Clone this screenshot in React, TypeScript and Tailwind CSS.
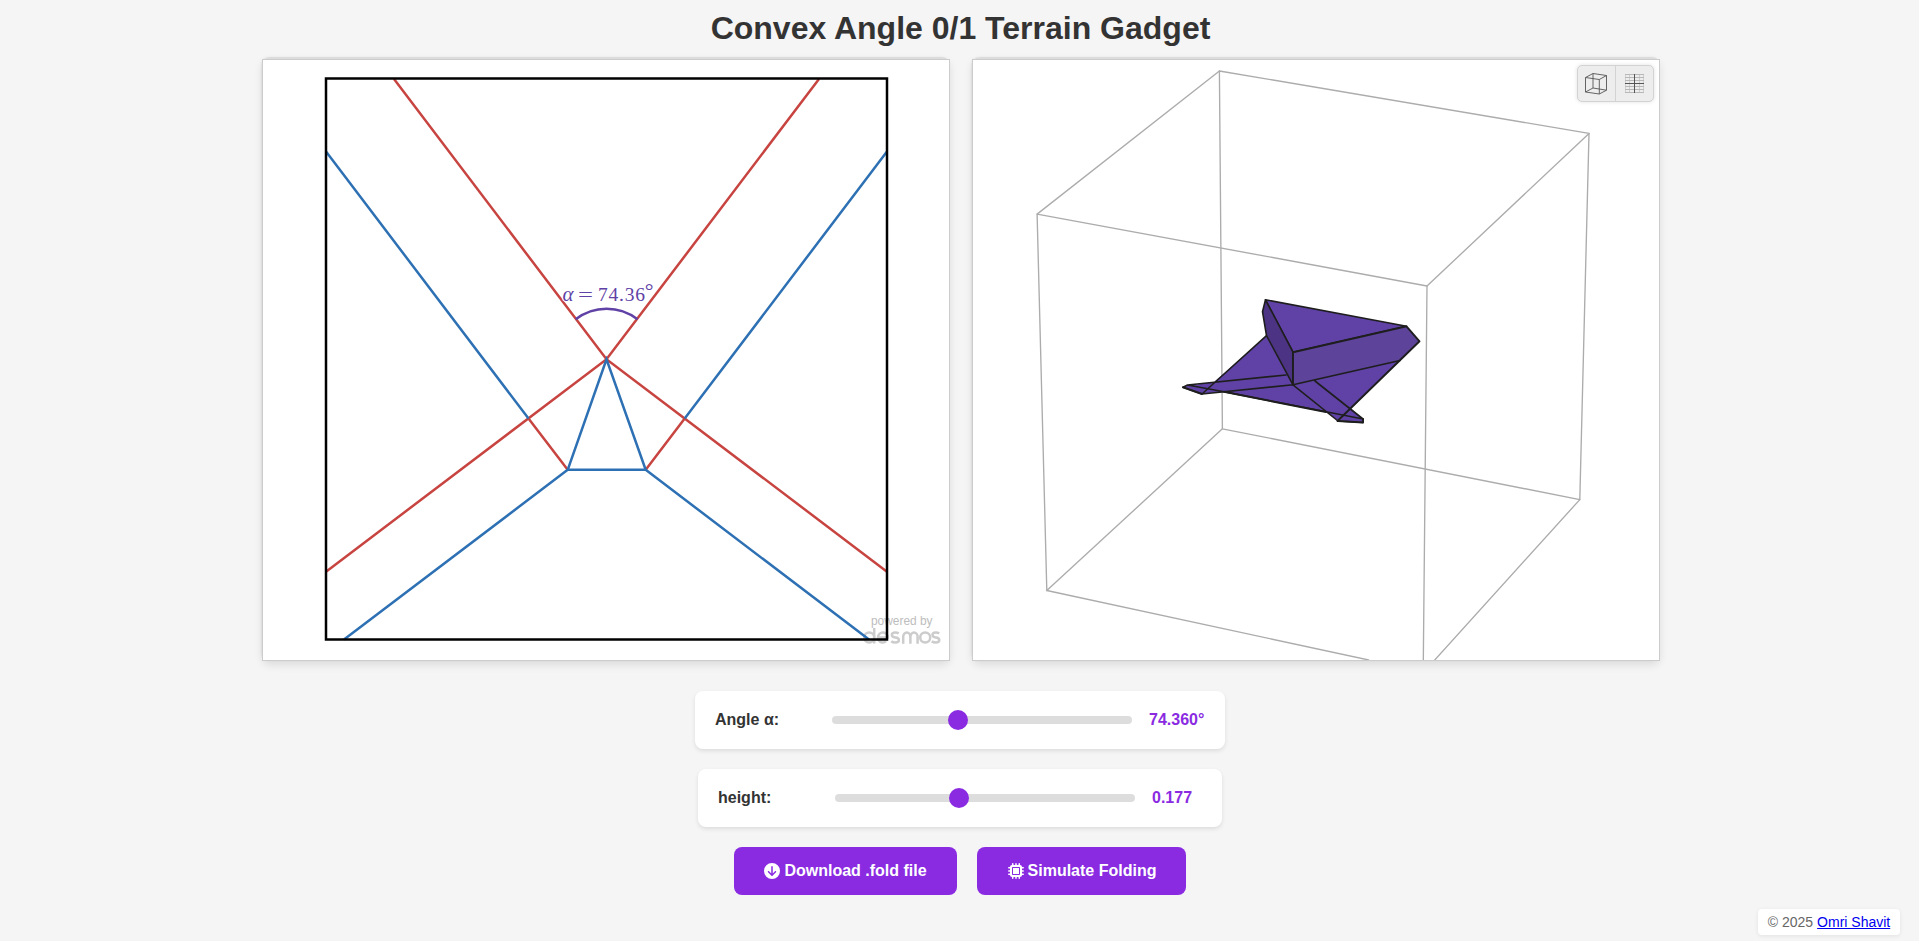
import type { ReactNode } from "react";
import { FaCircleArrowDown, FaMicrochip } from "react-icons/fa6";

const RED = "#c74440";
const BLUE = "#2d70b3";
const PURPLE = "#6042a6";
const INK = "#1e1e1e";

function CreasePattern() {
  return (
    <svg className="block h-full w-full" viewBox="263 60 686 600" fill="none" strokeWidth="2.5">
      <text x="871" y="624.9" fontSize="12" fill="#bdbdbd" fontFamily="Liberation Sans, Arial, sans-serif" textLength="61.5" lengthAdjust="spacingAndGlyphs">powered by</text>
      <g stroke="#cccccc" strokeWidth="2.5">
        <circle cx="869.2" cy="637.5" r="5" />
        <path d="M874.2 628v15.500" />
        <path d="M878.200 637.5h9.500a4.900 5 0 1 0-1.600 3.700" />
        <path d="M898.700 633.400c-1-.8-2.200-1-3.400-1-4.600 0-4.600 4.700 0 5 4.800.3 4.800 5.200 0 5.200-1.600 0-3-.4-4-1.300" />
        <path d="M903.200 643.700v-7a3.600 4.200 0 0 1 7.200 0v7v-7a3.600 4.200 0 0 1 7.200 0v7" />
        <circle cx="925.200" cy="637.500" r="5" />
        <path d="M939.200 633.400c-1-.8-2.200-1-3.400-1-4.400 0-4.400 4.700 0 5 4.600.3 4.600 5.200 0 5.200-1.600 0-3-.4-4-1.300" />
      </g>
      <g stroke={RED}>
        <path d="M394 79 606.500 359.300 819 79" />
        <path d="M326 571.700 606.500 359.300 887 571.700" />
        <path d="M528.500 418.500 567.700 469.800M684.700 418.500 645.700 469.800" />
      </g>
      <g stroke={BLUE}>
        <path d="M326 151.500 528.500 418.500M887 151.500 684.700 418.500" />
        <path d="M567.700 469.800 606.500 359.300 645.700 469.800Z" />
        <path d="M344 639.500 567.700 469.800M869 639.500 645.700 469.800" />
      </g>
      <path d="M575.700 319.200A50.500 50.500 0 0 1 637.500 319.200" stroke={PURPLE} />
      <rect x="326" y="78.500" width="561" height="561" stroke="#000" />
      <g fill={PURPLE} stroke="#fff" strokeWidth="2" paintOrder="stroke" fontFamily="Liberation Serif, serif" fontSize="19.500">
        <text x="562.500" y="300.800" fontSize="21" fontStyle="italic" textLength="11" lengthAdjust="spacingAndGlyphs">α</text>
        <text x="578" y="301" textLength="15" lengthAdjust="spacingAndGlyphs">=</text>
        <text x="598" y="300.800" textLength="47" lengthAdjust="spacing">74.36</text>
        <text x="644.700" y="298.300" fontSize="22">°</text>
      </g>
    </svg>
  );
}

function FoldedModel() {
  return (
    <svg className="block h-full w-full" viewBox="973 60 686 600" fill="none" strokeLinejoin="round" strokeLinecap="round">
      <g stroke="#acacac" strokeWidth="1.350">
        <path d="M1219.400 71 1589 133.400 1427 286 1037.100 214.100Z" />
        <path d="M1219.400 71 1222.400 428.800 1579.800 499.600 1589 133.400" />
        <path d="M1037.100 214.100 1046.800 590.500 1222.400 428.800" />
        <path d="M1046.800 590.500 1368.600 660" />
        <path d="M1427 286 1423.300 662M1579.800 499.600 1434.300 660.500" />
      </g>
      <g stroke={INK} strokeWidth="1.600" fill={PURPLE}>
        <path d="M1266.500 336 1214 382 1183.500 386.500 1202 393.500 1224 392 1326 412 1338 420.500 1363 422V419L1351 408.500 1400 360.500 1419.500 341 1293 384Z" stroke="none" />
        <path d="M1265.500 299.800 1406.500 326.300 1293 352.200Z" />
        <path d="M1265.500 299.800 1293 352.200V384.800L1266.500 335.700 1262.500 311.700Z" fill="#4c3384" />
        <path d="M1293 352.200 1406.500 326.300 1419.500 341.300 1400 360.500 1293 384.800Z" fill="#5d4399" stroke="none" />
        <path d="M1293 352.200 1406.500 326.300 1419.500 341.300 1337.500 421M1293 352.200V384.800" strokeWidth="1.900" fill="none" />
        <path d="M1293 384.800 1400 360.500M1266.500 335.700 1202 394 1183 387.300 1187.500 385 1286 375M1202 394 1293 384.800 1338 421 1363 422.500V419L1315 381M1187.500 385 1224 391.800 1363 419" fill="none" />
        <path d="M1183 387.300 1202 394M1338 421 1363 422.500V419M1224 391.800 1326 412" strokeWidth="2" fill="none" />
      </g>
    </svg>
  );
}

function CubeIcon() {
  return (
    <svg className="h-6 w-6" viewBox="0 0 24 24" fill="none" stroke="#555" strokeWidth="0.9" strokeLinejoin="round">
      <path d="M1.500 5.500 9 1.500 22.500 3.500 15.300 7.500ZM1.500 5.500V20L15.300 22V7.500M9 1.500V16L22.500 18.200V3.500M1.500 20 9 16M15.300 22 22.500 18.200" />
    </svg>
  );
}

function GridIcon() {
  return (
    <svg className="h-[19px] w-[19px]" viewBox="0 0 19 19" fill="none">
      <path d="M.5 0v19M4.500 0v19M14.500 0v19M18.500 0v19" stroke="#cfcfcf" />
      <path d="M0 .5h19M0 3.500h19M0 6.500h19M0 12.500h19M0 15.500h19M0 18.500h19" stroke="#b8b8b8" />
      <path d="M9.500 0v19M0 9.500h19" stroke="#555" />
    </svg>
  );
}

function Panel({ children }: { children: ReactNode }) {
  return (
    <section className="rounded-lg border-t-2 border-[#dcdcdc] shadow-[0_4px_8px_rgba(0,0,0,0.1),-1px_0_2px_rgba(0,0,0,0.06)]">
      <div className="relative h-[602px] w-[688px] border border-[#ccc] bg-white">{children}</div>
    </section>
  );
}

type SliderProps = { label: string; value: string; position: number; wide?: boolean };

function SliderCard({ label, value, position, wide }: SliderProps) {
  return (
    <div className={`flex h-[58px] items-center rounded-lg bg-white px-5 font-bold shadow-[0_2px_4px_rgba(0,0,0,0.1)] ${wide ? "w-[530px]" : "w-[524px]"}`}>
      <span className="w-[117px] shrink-0 pl-[0.5px] text-[#333]">{label}</span>
      <div className="relative h-2 w-[300px] shrink-0 rounded bg-[#ddd]">
        <div className="absolute -top-1.5 h-5 w-5 rounded-full bg-[#8a2be2]" style={{ left: position }} />
      </div>
      <span className="ml-[17.5px] shrink-0 text-[#8a2be2]">{value}</span>
    </div>
  );
}

export default function App() {
  return (
    <div className="flex h-[941px] flex-col items-center bg-[#f5f5f5] font-['Liberation_Sans',Arial,sans-serif] text-base leading-5">
      <h1 className="mt-2.5 h-[47px] pl-0.5 text-[32px] leading-9 font-bold text-[#333]">Convex Angle 0/1 Terrain Gadget</h1>
      <main className="flex gap-[22px] pl-0.5">
        <Panel>
          <CreasePattern />
        </Panel>
        <Panel>
          <FoldedModel />
          <div className="absolute top-[5px] right-[5px] flex h-[37px] w-[77px] items-center rounded-[5px] border border-[#d3d3d3] bg-[#ededed] shadow-[0_0_4px_rgba(0,0,0,0.12)]">
            <button className="flex h-full w-[38px] items-center justify-center border-r border-[#d3d3d3]">
              <CubeIcon />
            </button>
            <button className="flex h-full w-[37px] items-center justify-center">
              <GridIcon />
            </button>
          </div>
        </Panel>
      </main>
      <div className="mt-[30px] flex flex-col items-center gap-5">
        <SliderCard label="Angle α:" value="74.360°" position={116} wide />
        <SliderCard label="height:" value="0.177" position={114} />
      </div>
      <div className="mt-5 flex gap-5 font-bold text-white">
        <button className="flex h-12 w-[223px] items-center justify-center gap-1 rounded-lg bg-[#8a2be2] pl-px">
          <FaCircleArrowDown /> Download .fold file
        </button>
        <button className="flex h-12 w-[209px] items-center justify-center gap-1 rounded-lg bg-[#8a2be2] pl-0.5">
          <FaMicrochip /> Simulate Folding
        </button>
      </div>
      <footer className="mt-3.5 mr-[19px] flex h-[26px] w-[142px] items-center justify-center gap-1 self-end rounded bg-white text-sm text-[#666] shadow-[0_1px_4px_rgba(0,0,0,0.08)]">
        © 2025 <a href="#" className="text-[#0000ee] underline">Omri Shavit</a>
      </footer>
    </div>
  );
}
